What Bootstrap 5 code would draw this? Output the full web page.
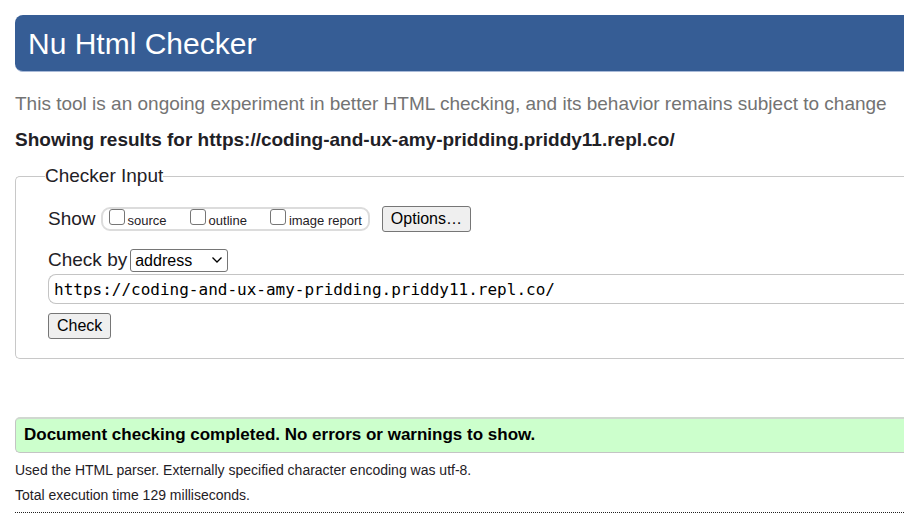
<!DOCTYPE html>
<html lang="en">
<head>
<meta charset="utf-8">
<meta name="viewport" content="width=device-width, initial-scale=1">
<title>Nu Html Checker</title>
<link href="https://cdn.jsdelivr.net/npm/bootstrap@5.3.0/dist/css/bootstrap.min.css" rel="stylesheet">
<style>
  body { font: 19px/24px "Liberation Sans", Arial, sans-serif; color: #1f2126; background: #fff; padding: 15px 0 0 15px; }
  .banner { background: #365d95; border-bottom: 1px solid #a9bad8; border-radius: 8px 0 0 8px; padding: 9px 13px 8px; }
  .banner h1 { font-size: 30px; line-height: 39px; font-weight: 400; color: #fff; }
  .notice { color: #737373; margin: 20px 0 12px; }
  .results-title { font-size: 19px; line-height: 24px; font-weight: 700; }
  .checker { border: 1px solid #c8c8c8; border-right: 0; border-radius: 5px 0 0 5px; padding: 18px 0 19px 32px; margin-top: 12px; }
  .checker legend { float: none; width: auto; margin: 0 0 0 -3px; padding: 0; font-size: 19px; line-height: 24px; }
  .show-group { border: 2px solid #dcdcdc; border-radius: 9px; height: 24px; padding: 0 6px; gap: 23px; font-size: 13px; line-height: 20px; margin: 0 12px 0 5px; }
  .show-group label { padding-top: 2px; }
  .show-group .form-check-input { width: 16px; height: 16px; border: 1px solid #767676; border-radius: 3px; margin: 0 3px 0 0; }
  .checker .btn { font-size: 16px; line-height: 20px; color: #000; background: #efefef; border: 1px solid #767676; border-radius: 3px; padding: 2px 8px; }
  .method-row { margin-top: 16px; }
  .method { width: 98px; height: 23px; font-size: 16px; line-height: 19px; color: #000; border: 1px solid #767676; border-radius: 3px; padding: 1px 22px 0 4px; margin-left: 3px;
    background-image: url("data:image/svg+xml,%3Csvg xmlns='http://www.w3.org/2000/svg' viewBox='0 0 12 8'%3E%3Cpath d='M1.5 1.5 6 6l4.500-4.500' fill='none' stroke='%23000' stroke-width='1.300'/%3E%3C/svg%3E"); background-size: 12px 8px; background-position: right 4px center; }
  .address { font: 16px/22px "DejaVu Sans Mono", monospace; color: #000; height: 30px; border: 1px solid #c4c4c4; border-right: 0; border-radius: 8px 0 0 8px; padding: 3px 5px; margin: 2px 0 9px; }
  .success { font-size: 17px; line-height: 20px; font-weight: 700; color: #000; background: #cfc; border: 1px solid #c4c4c4; border-top: 2px solid #d0d8d0; border-right: 0; border-radius: 5px 0 0 5px; padding: 6px 8px 7px; margin: 58px 0 7px; }
  .details { font-size: 14px; line-height: 20px; margin-bottom: 5px; }
  .divider { border: 0; border-top: 1px dotted #222; opacity: 1; margin: 7px 0 0; }
</style>
<script src="https://cdn.jsdelivr.net/npm/bootstrap@5.3.0/dist/js/bootstrap.bundle.min.js"></script>
</head>
<body>
<header class="banner"><h1 class="mb-0">Nu Html Checker</h1></header>
<main>
  <p class="notice">This tool is an ongoing experiment in better HTML checking, and its behavior remains subject to change</p>
  <h2 class="results-title mb-0">Showing results for https://coding-and-ux-amy-pridding.priddy11.repl.co/</h2>
  <form>
    <fieldset class="checker">
      <legend>Checker Input</legend>
      <div class="d-flex align-items-center">
        <span>Show</span>
        <div class="show-group d-flex align-items-start" role="group" aria-label="Show">
          <div class="d-flex"><input class="form-check-input" type="checkbox" id="source"><label for="source">source</label></div>
          <div class="d-flex"><input class="form-check-input" type="checkbox" id="outline"><label for="outline">outline</label></div>
          <div class="d-flex"><input class="form-check-input" type="checkbox" id="image-report"><label for="image-report">image report</label></div>
        </div>
        <button type="button" class="btn">Options…</button>
      </div>
      <div class="method-row d-flex align-items-center">
        <label for="method">Check by</label>
        <select class="form-select method" id="method"><option>address</option><option>file upload</option><option>text input</option></select>
      </div>
      <input class="form-control address" type="text" aria-label="Address" value="https://coding-and-ux-amy-pridding.priddy11.repl.co/" spellcheck="false">
      <button type="button" class="btn">Check</button>
    </fieldset>
  </form>
  <p class="success">Document checking completed. No errors or warnings to show.</p>
  <p class="details">Used the HTML parser. Externally specified character encoding was utf-8.</p>
  <p class="details">Total execution time 129 milliseconds.</p>
  <hr class="divider">
</main>
</body>
</html>
